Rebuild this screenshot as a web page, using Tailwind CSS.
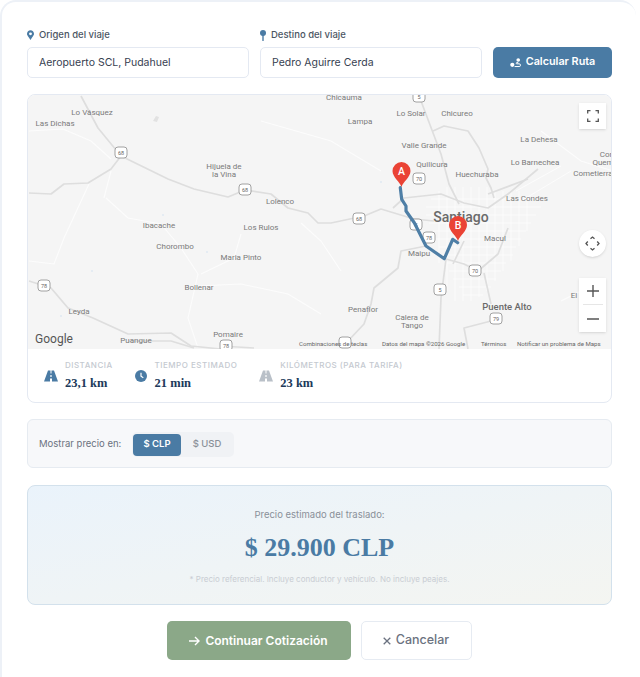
<!DOCTYPE html>
<html lang="en">
  <head>
    <meta charset="UTF-8" />
    <meta name="viewport" content="width=device-width, initial-scale=1.0" />
    <title>Cotizar traslado</title>
    <script src="https://cdn.jsdelivr.net/npm/@tailwindcss/browser@4"></script>
  </head>
  <body class="bg-white font-['Inter',sans-serif] overflow-hidden">
    <div class="w-[636px] h-[677px] border-t-2 border-l-2 border-[#edf1f7] rounded-tl-[16px] rounded-tr-[16px] pl-[25px] pr-[24px] pt-[25px]">
      <!-- route form -->
      <div class="flex gap-[11px] items-end">
        <div class="w-[222px]">
          <label class="flex items-center gap-[5px] h-[14px] mt-[1px] mb-[5px] text-[9.5px] font-medium text-[#4b5563]">
            <svg class="w-[7px] h-[10px]" viewBox="0 0 384 512" fill="#4a7ba4"><path d="M172 502C27 291 0 263 0 192 0 86 86 0 192 0s192 86 192 192c0 71-27 99-172 310-10 14-30 14-40 0zm20-230a80 80 0 1 0 0-160 80 80 0 0 0 0 160z"/></svg>
            Origen del viaje
          </label>
          <input value="Aeropuerto SCL, Pudahuel" class="w-full h-[31px] px-[11px] bg-white border border-[#e4e9f2] rounded-[5px] text-[10.5px] text-[#374151] outline-none" />
        </div>
        <div class="w-[222px]">
          <label class="flex items-center gap-[5px] h-[14px] mt-[1px] mb-[5px] text-[9.5px] font-medium text-[#4b5563]">
            <svg class="w-[6px] h-[11px]" viewBox="0 0 6 11" fill="#4a7ba4"><circle cx="3" cy="3" r="3"/><rect x="2.3" y="5" width="1.4" height="6" rx=".6"/></svg>
            Destino del viaje
          </label>
          <input value="Pedro Aguirre Cerda" class="w-full h-[31px] px-[11px] bg-white border border-[#e4e9f2] rounded-[5px] text-[10.5px] text-[#374151] outline-none" />
        </div>
        <button class="w-[119px] h-[31px] flex items-center justify-center gap-[5px] bg-[#4a7ba4] rounded-[5px] text-[10.8px] font-semibold text-white">
          <svg class="w-[11px] h-[10px]" viewBox="0 0 12 11" fill="white"><circle cx="2.500" cy="7.500" r="2.300"/><circle cx="9" cy="2.200" r="2"/><path d="M5 9.400h5a1 1 0 0 0 0-3H7.400a.6.6 0 0 1 0-1.300H9" fill="none" stroke="white" stroke-width="1.100"/></svg>
          Calcular Ruta
        </button>
      </div>

      <!-- map card -->
      <div class="mt-[16px] w-[585px] h-[309px] border border-[#e4e9f2] rounded-[8px] overflow-hidden bg-white">
        <div class="relative h-[254px] bg-[#f5f5f5]">
          <svg class="block w-[585px] h-[254px]" viewBox="27 94 585 254" fill="#7a7a7a" font-family="Roboto, sans-serif" font-size="8" text-anchor="middle">
            <!-- minor roads -->
            <g fill="none" stroke="#fcfcfc" stroke-width="1.100">
              <path d="M105 197 127 217 160 223 180 247 197 273 187 317 197 347M197 285 240 283 287 293 320 313M240 233 233 257 200 273M110 170 103 197M88 183 63 237 53 263 28 260M28 130 62 128 90 140 110 158M260 120 330 140 380 170M300 222 320 240 340 270M540 130 580 160 612 170M560 300 600 280"/>
            </g>
            <!-- water specks -->
            <path d="M152 120l3-5 3 1-2 5z" fill="#e2e2e2"/>
            <g fill="#dfe8f2"><circle cx="162" cy="214" r="1"/><circle cx="206" cy="251" r="1"/><circle cx="91" cy="270" r="1"/><circle cx="60" cy="315" r="1"/><circle cx="380" cy="181" r="1"/></g>
            <!-- city grid -->
            <g fill="none" stroke="#ffffff" stroke-width="0.700">
              <path d="M430 198H535M425 206H540M425 214H535M428 222H530M432 230H525M435 238H520M438 246H515M440 254H512M445 262H505M448 270H500M452 278H495M458 286H490M462 294H482"/>
              <path d="M438 190V262M446 186V290M454 186V300M462 186V300M470 186V300M478 186V296M486 186V290M494 190V280M502 190V270M510 190V260M518 190V245M526 195V230"/>
              <path d="M515 190 560 165M520 200 570 170"/>
            </g>
            <!-- main roads -->
            <g fill="none" stroke="#dedede" stroke-width="1.700" stroke-linejoin="round">
              <path d="M80 95 97 127 120 155 110 168 87 182 63 183 50 193 28 192"/>
              <path d="M120 155 167 178 193 188 227 196 244 189 270 193 287 207 307 212 317 222 330 222 363 215 380 208 413 218 433 220"/>
              <path d="M28 280 50 287 67 307 92 317 127 333 170 332 190 345 220 348"/>
              <path d="M127 340 170 340 193 347M220 345 253 347"/>
              <path d="M420 100 440 153 448 183 458 203"/>
              <path d="M432 130 443 125 467 130 478 147 487 168 485 177 490 187 493 197"/>
              <path d="M392 207 403 197 440 193 463 202 487 207 507 193 537 168"/>
              <path d="M487 193 527 178"/>
              <path d="M445 258 440 297 438 348"/>
              <path d="M445 258 463 263 477 270"/>
              <path d="M463 240 452 263"/>
              <path d="M507 227 497 253 477 270"/>
              <path d="M483 272 490 303"/>
              <path d="M425 245 400 250 397 267 373 287 370 303 363 323 347 340"/>
              <path d="M467 348 463 327 490 320"/>
            </g>
            <!-- labels -->
            <g>
              <text x="91" y="114">Lo Vásquez</text><text x="54" y="125">Las Dichas</text>
              <text x="223" y="168">Hijuela de</text><text x="223" y="176">la Vina</text>
              <text x="279" y="203">Lolenco</text><text x="158" y="227">Ibacache</text>
              <text x="260" y="229">Los Rulos</text><text x="174" y="248">Chorombo</text>
              <text x="240" y="259">Maria Pinto</text><text x="198" y="289">Bollenar</text>
              <text x="78" y="313">Leyda</text><text x="227" y="336">Pomaire</text>
              <text x="135" y="342">Puangue</text><text x="343" y="99">Chicauma</text>
              <text x="410" y="115">Lo Solar</text><text x="456" y="115">Chicureo</text>
              <text x="359" y="123">Lampa</text><text x="423" y="147">Valle Grande</text>
              <text x="538" y="141">La Dehesa</text><text x="431" y="166">Quilicura</text>
              <text x="534" y="164">Lo Barnechea</text><text x="476" y="176">Huechuraba</text>
              <text x="605" y="156">Cor</text><text x="602" y="164">Quem</text>
              <text x="592" y="175">Cometierra</text><text x="526" y="200">Las Condes</text>
              <text x="494" y="240">Macul</text><text x="418" y="255">Maipu</text>
              <text x="362" y="311">Penaflor</text><text x="411" y="319">Calera de</text>
              <text x="411" y="327">Tango</text><text x="573" y="297">El</text>
              <text x="460" y="221" font-size="14" font-weight="500" fill="#6a6a6a">Santiago</text>
              <text x="506" y="309" font-size="9.500" font-weight="500" fill="#6a6a6a">Puente Alto</text>
            </g>
            <!-- road shields -->
            <g font-size="5.500" fill="#666666">
              <g fill="#ffffff" stroke="#8c8c8c" stroke-width="0.800">
                <rect x="114" y="146" width="12" height="11" rx="3"/><rect x="238" y="183" width="12" height="11" rx="3"/>
                <rect x="37" y="279" width="12" height="11" rx="3"/><rect x="219" y="339" width="12" height="11" rx="3"/>
                <rect x="412" y="90" width="12" height="11" rx="3"/><rect x="412" y="172" width="12" height="11" rx="3"/>
                <rect x="352" y="212" width="12" height="11" rx="3"/><rect x="409" y="218" width="12" height="11" rx="3"/>
                <rect x="422" y="231" width="12" height="11" rx="3"/><rect x="468" y="264" width="12" height="11" rx="3"/>
                <rect x="433" y="283" width="12" height="11" rx="3"/><rect x="489" y="312" width="12" height="11" rx="3"/>
                <rect x="338" y="336" width="12" height="11" rx="3"/>
              </g>
              <text x="120" y="154">68</text><text x="244" y="191">68</text><text x="43" y="287">78</text>
              <text x="225" y="347">78</text><text x="418" y="98">5</text><text x="418" y="180">70</text>
              <text x="358" y="220">68</text><text x="415" y="226">5</text><text x="428" y="239">78</text>
              <text x="474" y="272">70</text><text x="439" y="291">5</text><text x="495" y="320">79</text>
            </g>
            <!-- route -->
            <path d="M399.300 186.700 400.700 198.300 405 205 405 210 413.300 221.700 425 245 443.300 257.700 451.700 238.300 456.700 241.700" fill="none" stroke="#4f7fa6" stroke-width="3.200" stroke-linejoin="round" stroke-linecap="round"/>
            <!-- markers -->
            <path d="M400.500 186c-1.500-5-9-10-9-16a9 9 0 0 1 18 0c0 6-7.500 11-9 16z" fill="#ea4335"/>
            <text x="400.500" y="174" font-size="10.500" font-weight="500" fill="#ffffff">A</text>
            <path d="M457 240c-1.500-5-9-10-9-16a9 9 0 0 1 18 0c0 6-7.500 11-9 16z" fill="#ea4335"/>
            <text x="457" y="228" font-size="10.500" font-weight="500" fill="#ffffff">B</text>
            <!-- attribution -->
            <text x="53" y="342" font-size="12" font-weight="400" fill="#555555">Google</text>
            <g font-size="6.100" fill="#666666" text-anchor="start">
              <text x="298" y="345">Combinaciones de teclas</text>
              <text x="381" y="345">Datos del mapa ©2026 Google</text>
              <text x="480" y="345">Términos</text>
              <text x="516" y="345">Notificar un problema de Maps</text>
            </g>
          </svg>
          <!-- map controls -->
          <div class="absolute left-[551px] top-[8px] w-[27px] h-[26px] bg-white shadow-sm flex items-center justify-center">
            <svg class="w-[12px] h-[12px]" viewBox="0 0 12 12" fill="none" stroke="#555555" stroke-width="1.300"><path d="M.7 3.500V.7h2.800M8.500.7h2.800v2.800M11.300 8.500v2.800H8.500M3.500 11.300H.7V8.500"/></svg>
          </div>
          <div class="absolute left-[551px] top-[135px] w-[27px] h-[27px] bg-white rounded-full shadow-sm flex items-center justify-center">
            <svg class="w-[15px] h-[15px]" viewBox="0 0 15 15" fill="none" stroke="#555555" stroke-width="1.300"><path d="M5.500 2.800 7.500 1l2 1.800M5.500 12.200l2 1.800 2-1.800M2.800 5.500 1 7.500l1.800 2M12.200 5.500 14 7.500l-1.800 2"/></svg>
          </div>
          <div class="absolute left-[551px] top-[183px] w-[27px] h-[54px] bg-white shadow-sm flex flex-col items-center">
            <div class="h-[26px] flex items-center">
              <svg class="w-[12px] h-[12px]" viewBox="0 0 12 12" stroke="#555555" stroke-width="1.400"><path d="M0 6h12M6 0v12"/></svg>
            </div>
            <div class="w-[20px] h-px bg-[#e6e6e6]"></div>
            <div class="h-[27px] flex items-center">
              <svg class="w-[12px] h-[12px]" viewBox="0 0 12 12" stroke="#555555" stroke-width="1.400"><path d="M0 6h12"/></svg>
            </div>
          </div>
        </div>
        <!-- trip stats -->
        <div class="flex items-center h-[53px] pl-[16px] gap-[22px]">
          <div class="flex items-center gap-[7px]">
            <svg class="w-[14px] h-[12px]" viewBox="0 0 14 11" fill="#4a7ba4"><path fill-rule="evenodd" d="M4 0h2.500v3h1V0H10l4 11H8V8H6v3H0zM6.400 4.500v2h1.200v-2z"/></svg>
            <div>
              <div class="text-[8px] leading-[11px] font-medium tracking-[0.5px] text-[#c4c9d0]">DISTANCIA</div>
              <div class="mt-[5px] font-['Liberation_Serif',serif] font-bold text-[12.5px] leading-[15px] text-[#20395a]">23,1 km</div>
            </div>
          </div>
          <div class="flex items-center gap-[8px]">
            <svg class="w-[12px] h-[12px]" viewBox="0 0 13 13"><circle cx="6.500" cy="6.500" r="6.500" fill="#4a7ba4"/><path d="M6.500 3v3.800l2.500 1.500" fill="none" stroke="#ffffff" stroke-width="1.300"/></svg>
            <div>
              <div class="text-[8px] leading-[11px] font-medium tracking-[0.5px] text-[#c4c9d0]">TIEMPO ESTIMADO</div>
              <div class="mt-[5px] font-['Liberation_Serif',serif] font-bold text-[12.5px] leading-[15px] text-[#20395a]">21 min</div>
            </div>
          </div>
          <div class="flex items-center gap-[7px]">
            <svg class="w-[14px] h-[12px]" viewBox="0 0 14 11" fill="#b9c0c8"><path fill-rule="evenodd" d="M4 0h2.500v3h1V0H10l4 11H8V8H6v3H0zM6.400 4.500v2h1.200v-2z"/></svg>
            <div>
              <div class="text-[8px] leading-[11px] font-medium tracking-[0.5px] text-[#c4c9d0]">KILÓMETROS (PARA TARIFA)</div>
              <div class="mt-[5px] font-['Liberation_Serif',serif] font-bold text-[12.5px] leading-[15px] text-[#20395a]">23 km</div>
            </div>
          </div>
        </div>
      </div>

      <!-- currency switch -->
      <div class="mt-[16px] w-[585px] h-[49px] flex items-center gap-[11px] px-[11px] pt-[2px] bg-[#f7f8fa] border border-[#e6ebf1] rounded-[6px]">
        <span class="w-[82px] whitespace-nowrap text-[9.5px] text-[#6b7280]">Mostrar precio en:</span>
        <div class="flex items-center w-[102px] h-[25px] p-[1px] bg-[#f0f2f5] rounded-[5px]">
          <button class="w-[48px] h-[22px] bg-[#4a7ba4] rounded-[4px] text-[9.5px] font-semibold text-white">$ CLP</button>
          <button class="w-[52px] h-[22px] text-[9.5px] font-medium text-[#8a9099]">$ USD</button>
        </div>
      </div>

      <!-- price -->
      <div class="mt-[17px] w-[585px] h-[120px] flex flex-col items-center border border-[#d3e1ec] rounded-[8px] bg-gradient-to-br from-[#eaf3fb] to-[#f4f5f1]">
        <p class="mt-[23px] text-[9.5px] leading-[12px] text-[#8a9099]">Precio estimado del traslado:</p>
        <p class="mt-[11px] font-['Liberation_Serif',serif] font-bold text-[26px] leading-[32px] text-[#4a7ba4]">$ 29.900 CLP</p>
        <p class="mt-[10px] text-[8px] leading-[10px] text-[#c9cdd3]">* Precio referencial. Incluye conductor y vehículo. No incluye peajes.</p>
      </div>

      <!-- actions -->
      <div class="mt-[16px] w-[585px] flex justify-center gap-[10px] pr-[1px]">
        <button class="w-[184px] h-[39px] flex items-center justify-center gap-[5px] bg-[#8ba888] rounded-[5px] text-[12px] font-semibold text-white">
          <svg class="w-[11px] h-[10px]" viewBox="0 0 11 10" fill="none" stroke="white" stroke-width="1.400"><path d="M0 5h10M6 1l4 4-4 4"/></svg>
          Continuar Cotización
        </button>
        <button class="w-[111px] h-[39px] flex items-center justify-center gap-[5px] bg-white border border-[#e6ebf2] rounded-[5px] text-[12.5px] font-medium text-[#6b7280]">
          <svg class="w-[8px] h-[8px]" viewBox="0 0 8 8" stroke="#6b7280" stroke-width="1.300"><path d="M.7.7l6.600 6.600M7.300.7.7 7.300"/></svg>
          Cancelar
        </button>
      </div>
    </div>
  </body>
</html>
